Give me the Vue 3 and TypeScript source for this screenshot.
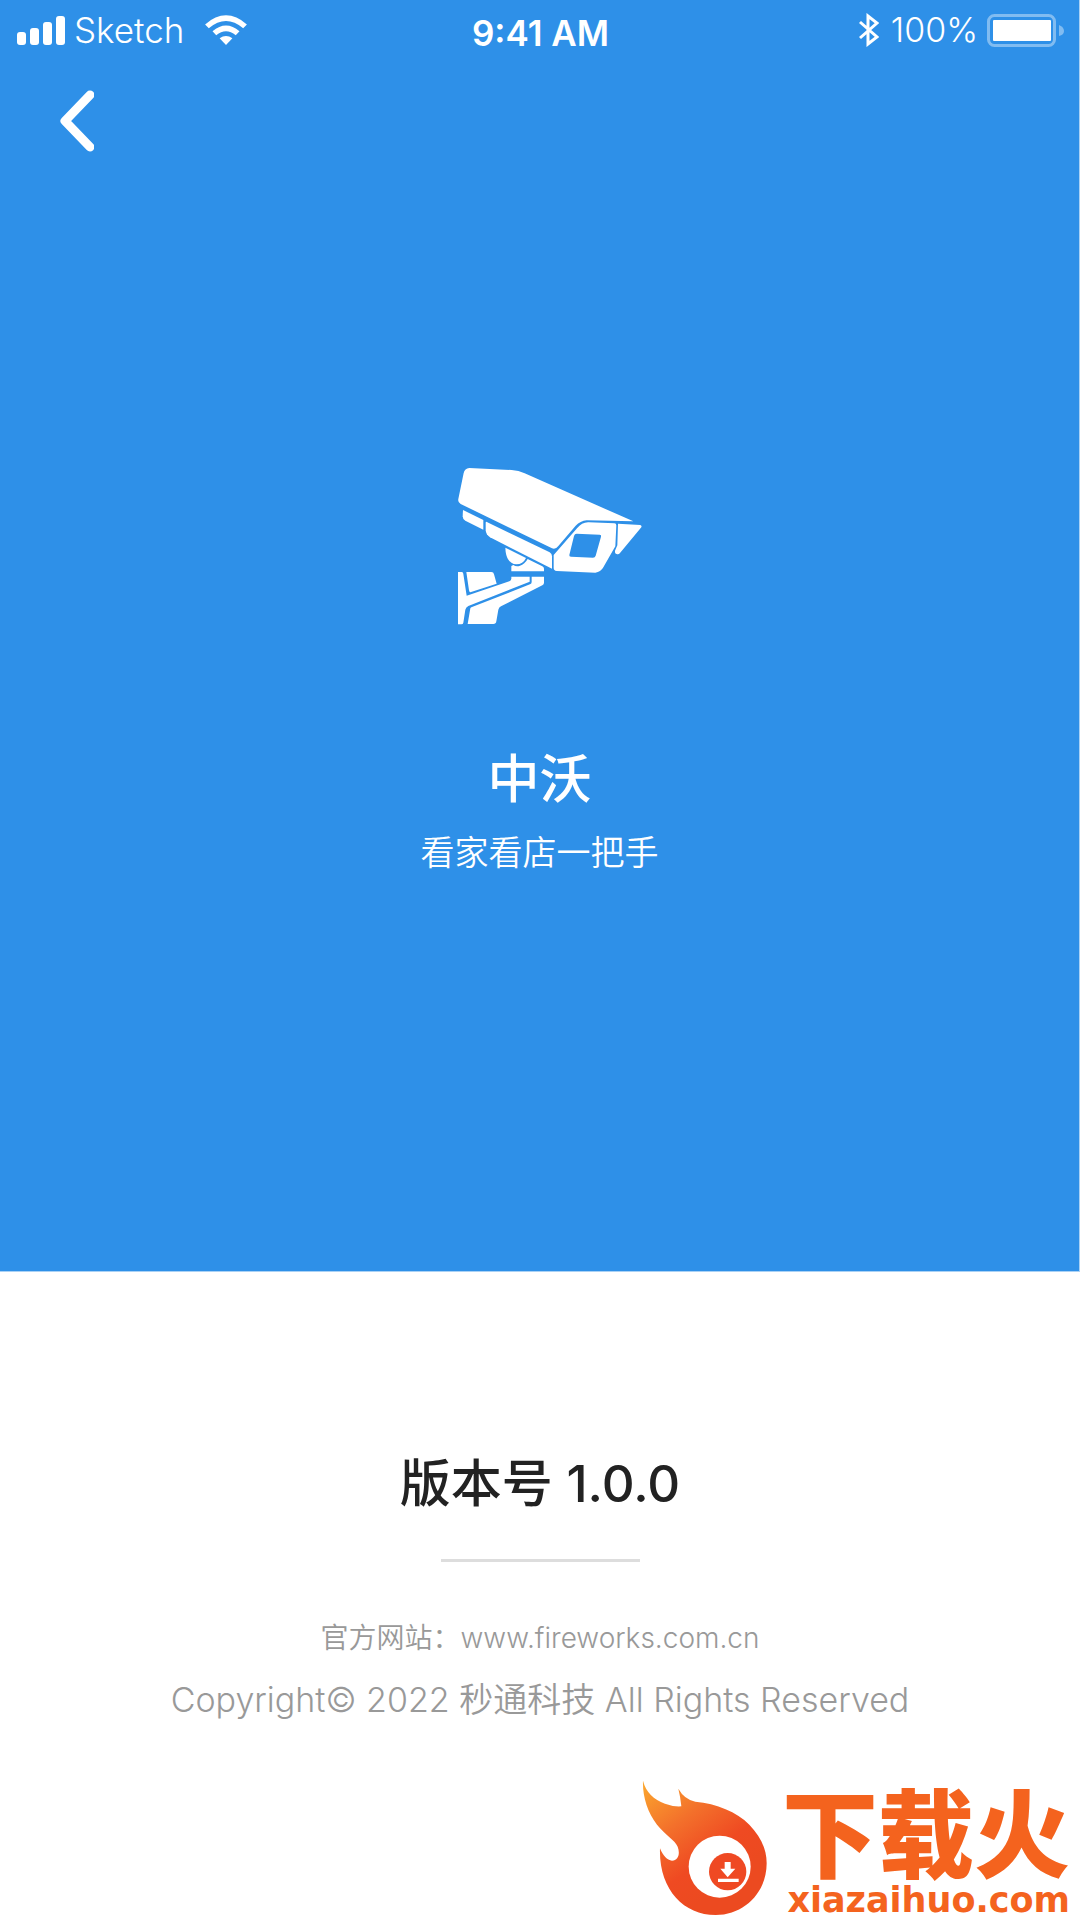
<script setup lang="ts">
interface AppInfo {
  name: string
  slogan: string
  version: string
  site: string
}

const info: AppInfo = {
  name: '中沃',
  slogan: '看家看店一把手',
  version: '1.0.0',
  site: 'www.fireworks.com.cn',
}

const goBack = (): void => window.history.back()
</script>

<template>
  <main class="page">
    <section class="hero">
      <header class="status">
        <div class="status-side">
          <svg class="signal" viewBox="0 0 48 29" aria-hidden="true">
            <rect x="0" y="16" width="9" height="13" rx="3" />
            <rect x="13" y="12" width="9" height="17" rx="3" />
            <rect x="26" y="6" width="9" height="23" rx="3" />
            <rect x="39" y="0" width="9" height="29" rx="3" />
          </svg>
          <span class="carrier">Sketch</span>
          <svg class="wifi" viewBox="616 41 124 89" aria-hidden="true">
            <path d="M616 69Q678 15 740 69L729 80Q678 37 627 80Z" />
            <path d="M638 89Q678 56 718 89L707 101Q678 77 649 101Z" />
            <path d="M659 110Q678 97 697 110L678 130Z" />
          </svg>
        </div>
        <time class="clock">9:41 AM</time>
        <div class="status-side end">
          <svg class="bluetooth" viewBox="0 0 20 34" aria-hidden="true">
            <path d="M1 9L18 24L9 31V3L18 10L1 25" />
          </svg>
          <span class="charge">100%</span>
          <svg class="battery" viewBox="0 0 77 33" aria-hidden="true">
            <rect class="case" x="1.5" y="1.5" width="66" height="30" rx="6" />
            <rect x="6" y="6" width="58" height="21" rx="1" />
            <path class="nub" d="M72 11Q77 13 77 17T72 22Z" />
          </svg>
        </div>
      </header>

      <button class="back" type="button" aria-label="返回" @click="goBack">
        <svg viewBox="0 0 34 62" aria-hidden="true">
          <path d="M30 5L5 31L30 57" />
        </svg>
      </button>

      <svg class="camera" viewBox="-9 51 618 477" aria-hidden="true">
        <path d="M88 54L215 60Q236 61 254 70L580 214L440 211Q421 213 407 227L355 288Q347 299 336 295L62 162Q53 157 55 147L71 69Q74 55 88 54Z" />
        <path d="M69 180L130 210V239L76 212Q68 208 68 199Z" />
        <path d="M139 215L329 307Q336 311 336 319V356L150 262Q138 254 137 241V219Q137 215 139 215Z" />
        <path fill-rule="evenodd" d="M446 217L523 220Q529 220 529 226L526 289L490 352Q482 367 466 368L350 363Q341 362 341 354V315L411 235Q426 216 446 217ZM410 251Q404 251 402 258L388 315Q387 320 393 320L459 323Q465 323 467 317L483 260Q485 254 479 254Z" />
        <path d="M534 221L601 225Q607 227 604 232L540 309Q536 314 530 312Q524 311 525 302L532 286Z" />
        <path d="M196 293L258 324Q249 343 229 343Q202 340 197 306Z" />
        <path d="M263 327L307 349Q312 351 312 356V364H214V348L220 345Q229 351 240 347Q254 343 263 327Z" />
        <path d="M54 366H65Q70 366 70 372L80 437L208 394Q214 391 214 386V380H269V395L85 468Q78 471 76 479L70 518Q69 523 64 523H54Z" />
        <path d="M79 366H154Q161 366 162 373L170 401L91 427Q88 427 87 421Z" />
        <path d="M275 380H312V398Q312 403 307 406L183 469Q177 472 175 479L169 514Q168 522 160 522H83L91 475Q92 472 96 471L270 403Q275 401 275 396Z" />
      </svg>

      <h1 class="name">{{ info.name }}</h1>
      <p class="slogan">{{ info.slogan }}</p>
    </section>

    <footer class="about">
      <h2 class="version">版本号 {{ info.version }}</h2>
      <hr class="rule" />
      <p class="site">官方网站：<a :href="`http://${info.site}`">{{ info.site }}</a></p>
      <p class="copyright">Copyright© 2022 秒通科技 All Rights Reserved</p>

      <div class="brand">
        <svg class="flame" viewBox="36 30 378 408" aria-hidden="true">
          <defs>
            <linearGradient id="fire" x1="0.05" y1="0" x2="0.6" y2="0.8">
              <stop offset="0" stop-color="#fba52e" />
              <stop offset="0.4" stop-color="#f3702b" />
              <stop offset="0.75" stop-color="#ef4a22" />
              <stop offset="1" stop-color="#ec4a20" />
            </linearGradient>
          </defs>
          <path fill="url(#fire)" d="M39 32C48 67 71 88 105 101Q132 111 154 109Q151 79 145 56Q163 88 196 95C260 101 320 125 358 164C391 198 410 237 410 280C410 368 342 435 257 435C160 435 86 356 90 235C99 258 111 270 126 272C145 272 151 250 143 230C136 211 105 194 81 164C52 127 37 77 39 32Z" />
          <circle cx="269" cy="290" r="93" fill="#fff" />
          <circle cx="293" cy="305" r="56" fill="#ef4923" />
          <path fill="#fff" d="M284 276H302V296H316L293 322L271 296H284ZM264 326H326V336H264Z" />
        </svg>
        <div class="brand-text">
          <strong class="brand-name">下载火</strong>
          <span class="brand-url">xiazaihuo.com</span>
        </div>
      </div>
    </footer>
  </main>
</template>

<style>
body {
  margin: 0;
  background: #fff;
}
</style>

<style scoped>
.page {
  display: flex;
  flex-direction: column;
  min-height: 100vh;
  font-family: Inter, "Noto Sans CJK SC", sans-serif;
}

.hero {
  display: flex;
  flex-direction: column;
  align-items: center;
  box-sizing: border-box;
  min-height: 66.25vh;
  border-right: 1px solid #a9d1f5;
  border-bottom: 1px solid #a9d1f5;
  background: #2e90e8;
  color: #fff;
}

.hero svg {
  display: block;
  fill: #fff;
}

.status {
  display: flex;
  align-items: center;
  align-self: stretch;
  height: 60px;
  padding: 0 15px 0 17px;
  font-size: 35px;
  font-weight: 300;
  line-height: 40px;
}

.status-side {
  display: flex;
  flex: 1;
  align-items: center;
}

.end {
  justify-content: flex-end;
}

.signal {
  width: 48px;
  height: 29px;
}

.carrier {
  margin: 0 21px 0 9px;
}

.wifi {
  width: 42px;
  height: 30px;
}

.clock {
  padding-top: 5px;
  font-weight: 600;
}

.hero .bluetooth {
  width: 20px;
  height: 34px;
  fill: none;
  stroke: #fff;
  stroke-width: 3;
}

.charge {
  margin: 0 9px 0 12px;
  font-size: 34px;
}

.battery {
  width: 77px;
  height: 33px;
}

.battery .case {
  fill: none;
  stroke: #fff;
  stroke-width: 3;
  opacity: 0.4;
}

.battery .nub {
  opacity: 0.4;
}

.back {
  align-self: flex-start;
  margin: 30px 0 0 60px;
  padding: 0;
  border: 0;
  background: none;
  cursor: pointer;
}

.hero .back svg {
  width: 34px;
  height: 62px;
  fill: none;
  stroke: #fff;
  stroke-width: 9;
  stroke-linecap: round;
  stroke-linejoin: round;
}

.camera {
  width: 206px;
  height: 159px;
  margin-top: 315px;
}

.name {
  margin: 116px 0 0;
  font-size: 52px;
  font-weight: 500;
  line-height: 76px;
}

.slogan {
  margin: 10px 0 0;
  font-size: 34px;
  font-weight: 350;
  line-height: 50px;
}

.about {
  display: flex;
  flex: 1;
  flex-direction: column;
  align-items: center;
  color: #999;
}

.version {
  margin: 174px 0 0;
  color: #222;
  font-size: 51px;
  font-weight: 500;
  line-height: 76px;
}

.rule {
  width: 199px;
  height: 3px;
  margin: 37px 0 0;
  border: 0;
  background: #ddd;
}

.site {
  margin: 56px 0 0;
  font-size: 28px;
  font-weight: 350;
  line-height: 40px;
}

.site a {
  color: inherit;
  text-decoration: none;
}

.copyright {
  margin: 17px 0 0;
  font-size: 34px;
  font-weight: 350;
  line-height: 50px;
}

.brand {
  display: flex;
  gap: 14px;
  align-self: flex-end;
  align-items: flex-end;
  margin-top: auto;
  padding: 0 10px 4px 0;
  color: #f4631e;
}

.flame {
  width: 126px;
  height: 136px;
}

.brand-text {
  display: flex;
  flex-direction: column;
  align-items: flex-end;
}

.brand-name {
  margin-bottom: 10px;
  font-family: "Noto Sans CJK SC", sans-serif;
  font-size: 96px;
  font-weight: 900;
  line-height: 90px;
}

.brand-url {
  font-family: "DejaVu Sans", sans-serif;
  font-size: 35px;
  font-weight: 700;
  line-height: 32px;
}
</style>
